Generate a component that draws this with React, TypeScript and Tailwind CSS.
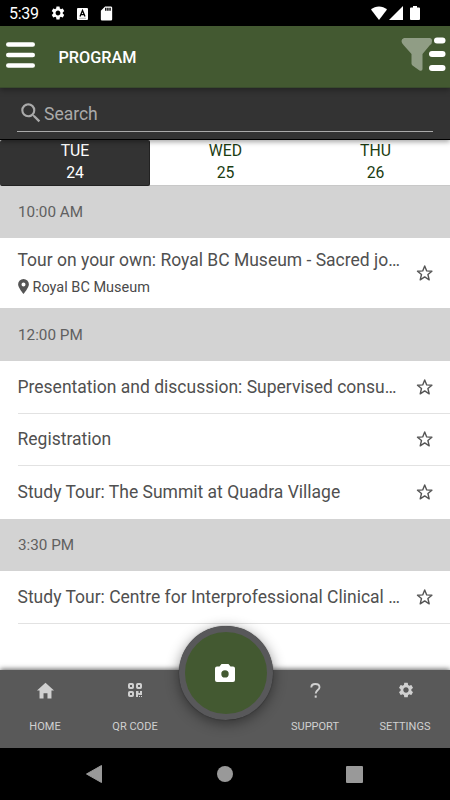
import React from "react";
import { MdSettings, MdSearch, MdSdCard } from "react-icons/md";
import { IoMdHome } from "react-icons/io";

function StatusBar() {
  return (
    <div className="flex h-[26px] shrink-0 items-center bg-black pl-[9px] text-white">
      <span className="w-[41px] pt-[2px] text-[16px] leading-[26px] tracking-[-0.3px]">5:39</span>
      <MdSettings className="size-[16px]" />
      <svg className="ml-[11px] mt-px" width="11" height="12" viewBox="0 0 11 12">
        <rect width="11" height="12" rx="1" fill="#fff" />
        <path d="M3 8.5 5.5 2.5 8 8.5M4 6.7h3" fill="none" stroke="#000" strokeWidth="1.3" />
        <path d="M2 10.3h7" stroke="#888" strokeWidth=".6" />
      </svg>
      <MdSdCard className="ml-[10px] size-[17px]" />
      <svg className="ml-auto mt-[-1px]" width="16" height="14" viewBox="0 0 16 14">
        <path d="M8 14 0 3.6C4.5-.7 11.5-.7 16 3.6Z" fill="#fff" />
      </svg>
      <svg className="ml-[2px]" width="14" height="14" viewBox="0 0 14 14">
        <path d="M14 0v14H0Z" fill="#fff" />
      </svg>
      <svg className="ml-[7px] mr-[30px]" width="10" height="14" viewBox="0 0 10 14">
        <path d="M3 0h4v1.5h2q1 0 1 1V13q0 1-1 1H1q-1 0-1-1V2.500q0-1 1-1h2Z" fill="#fff" />
      </svg>
    </div>
  );
}

function Header() {
  return (
    <header className="relative z-10 flex h-[62px] shrink-0 items-center border-b border-[#394b2d] bg-[#435931] pl-[6px] pr-[4px] shadow-[0_2px_6px_rgba(0,0,0,0.35)]">
      <svg className="mb-[3px]" width="29" height="26" viewBox="0 0 29 26">
        <g fill="#fff">
          <rect y=".2" width="29" height="4.600" rx="2.300" />
          <rect y="10.700" width="29" height="4.600" rx="2.300" />
          <rect y="21.200" width="29" height="4.600" rx="2.300" />
        </g>
      </svg>
      <h1 className="ml-[23.500px] pt-[3px] text-[16.25px] font-medium text-white">PROGRAM</h1>
      <svg className="ml-auto mb-[5px]" width="45" height="36" viewBox="0 0 45 36">
        <path
          d="M3 2h25.500q2.500 0 2.500 3t-2 4L21.500 18v15q0 2.500-3 1.500l-7-5q-1-1-1-2V18L2.500 9Q.5 7 .5 5t2.500-3Z"
          fill="#909d85"
        />
        <g fill="#fff">
          <rect x="33" y="1.500" width="11.500" height="6" rx="3" />
          <rect x="28" y="15" width="16.500" height="6" rx="3" />
          <rect x="28" y="29" width="16.500" height="6" rx="3" />
        </g>
      </svg>
    </header>
  );
}

function Search() {
  return (
    <div className="relative z-[5] h-[52px] shrink-0 border-b border-black bg-[#333] px-[17px] pt-[7px] shadow-[0_2px_5px_rgba(0,0,0,0.35)]">
      <div className="flex h-[36.500px] items-center border-b border-[#aaa] pt-px text-[#aaa]">
        <MdSearch className="ml-px size-[26px]" />
        <span className="pt-px text-[17.5px]">Search</span>
      </div>
    </div>
  );
}

const days = [
  { day: "TUE", date: "24", active: true },
  { day: "WED", date: "25", active: false },
  { day: "THU", date: "26", active: false },
];

function Days() {
  return (
    <div className="grid h-[46px] shrink-0 grid-cols-3 bg-white text-center text-[15.75px] leading-[22px]">
      {days.map((d) => (
        <div
          key={d.day}
          className={
            d.active
              ? "rounded-[2px] border-r border-b border-[#222] bg-[#333] pl-px text-white"
              : "border-b border-[#c8c8c8] pl-px text-[#1b3c12]"
          }
        >
          <div>{d.day}</div>
          <div>{d.date}</div>
        </div>
      ))}
    </div>
  );
}

function Group({ time, className }: { time: string; className: string }) {
  return (
    <div
      className={`flex shrink-0 items-center bg-[#d3d3d3] pl-[18px] text-[15.25px] leading-[22px] text-[#606060] ${className}`}
    >
      {time}
    </div>
  );
}

function Star() {
  return (
    <svg className="size-[18px] shrink-0" viewBox="0 0 18 18">
      <path
        d="M8.700 1.900 10.700 6.900 15.900 7.200 11.900 10.500 13.200 15.800 8.700 12.900 4.200 15.800 5.500 10.500 1.500 7.200 6.700 6.900Z"
        fill="none"
        stroke="#555"
        strokeWidth="1.400"
        strokeLinejoin="round"
      />
    </svg>
  );
}

function Pin() {
  return (
    <svg className="mb-[2px] mr-[4px]" width="11" height="15" viewBox="0 0 11 15">
      <path
        d="M5.500 0A5.400 5.400 0 0 1 10.900 5.300C10.900 8.800 5.500 15 5.500 15S.1 8.800.1 5.300A5.400 5.400 0 0 1 5.500 0Zm0 3.500a2 2 0 1 0 0 4 2 2 0 0 0 0-4Z"
        fill="#555"
      />
    </svg>
  );
}

function Row({ title, place, line = false }: { title: string; place?: string; line?: boolean }) {
  return (
    <div className={`flex shrink-0 pl-[17.5px] ${place ? "h-[70px]" : "h-[52.5px]"}`}>
      <div className={`flex flex-1 items-center ${line ? "border-b border-[#e2e2e2]" : ""}`}>
        <div className="w-[398px] whitespace-nowrap">
          <div className="text-[17.5px] leading-[24px] text-[#505050]">{title}</div>
          {place && (
            <div className="mt-[4px] flex items-center text-[14.5px] leading-[22px] text-[#4a4a4a]">
              <Pin />
              <span className="pt-px">{place}</span>
            </div>
          )}
        </div>
        <Star />
      </div>
    </div>
  );
}

function QrIcon() {
  return (
    <svg width="14" height="14" viewBox="0 0 14 14">
      <g fill="none" stroke="#d0d0d0" strokeWidth="2">
        <rect x="1" y="1" width="4" height="4" rx=".8" />
        <rect x="9" y="1" width="4" height="4" rx=".8" />
        <rect x="1" y="9" width="4" height="4" rx=".8" />
      </g>
      <path
        d="M8 8h2.500v2H12V8h2v4h-3.500v-.5H10V14H8ZM11 13h1v1h-1ZM13 13h1v1h-1Z"
        fill="#d0d0d0"
      />
    </svg>
  );
}

function HelpIcon() {
  return (
    <svg width="11" height="15" viewBox="0 0 11 15">
      <path
        d="M1.300 4.500C1.300 2.300 3 1 5.300 1s4.200 1.300 4.200 3.300C9.500 7 5.700 7 5.700 10.500"
        fill="none"
        stroke="#d0d0d0"
        strokeWidth="1.900"
      />
      <rect x="4.700" y="12.500" width="2" height="2.200" fill="#d0d0d0" />
    </svg>
  );
}

function CameraIcon() {
  return (
    <svg className="mr-px mb-px" width="20" height="18" viewBox="0 0 20 18">
      <path
        fillRule="evenodd"
        d="M6.500 0h7l2 2.500H18q2 0 2 2V16q0 2-2 2H2q-2 0-2-2V4.500q0-2 2-2h2.500ZM10 6.200a3.700 3.700 0 1 0 0 7.400A3.700 3.700 0 0 0 10 6.200Z"
        fill="#fff"
      />
    </svg>
  );
}

function Tab({ icon, label }: { icon: React.ReactNode; label: string }) {
  return (
    <div className="flex w-[90px] flex-col items-center pt-[10px]">
      <div className="flex h-[20px] items-center">{icon}</div>
      <span className="mt-[19px] text-[11px] leading-[16px]">{label}</span>
    </div>
  );
}

function BottomBar() {
  return (
    <nav className="relative flex h-[78px] shrink-0 bg-[#595959] text-[#d0d0d0] shadow-[0_-1px_5px_rgba(0,0,0,0.6)]">
      <Tab icon={<IoMdHome className="size-[21px]" />} label="HOME" />
      <Tab icon={<QrIcon />} label="QR CODE" />
      <div className="w-[90px]">
        <div className="absolute left-[178.500px] top-[-44px] flex size-[94px] items-center justify-center rounded-full border-[6px] border-[#58585a] bg-[#435931] shadow-[0_3px_14px_rgba(0,0,0,0.45),0_0_1px_#222]">
          <CameraIcon />
        </div>
      </div>
      <Tab icon={<HelpIcon />} label="SUPPORT" />
      <Tab icon={<MdSettings className="ml-px size-[18px]" />} label="SETTINGS" />
    </nav>
  );
}

function SystemNav() {
  return (
    <div className="relative flex h-[52px] shrink-0 items-center bg-black pl-[86px]">
      <svg width="16" height="18" viewBox="0 0 16 18">
        <path d="M15.500.5v17L.5 9Z" fill="#999" stroke="#999" strokeLinejoin="round" />
      </svg>
      <div className="ml-[115px] size-[16px] rounded-full bg-[#999]" />
      <div className="ml-[113px] size-[17px] rounded-[1px] bg-[#999]" />
    </div>
  );
}

export default function App() {
  return (
    <div className="flex h-[800px] w-[450px] flex-col overflow-hidden bg-white font-[Roboto,sans-serif]">
      <StatusBar />
      <Header />
      <Search />
      <Days />
      <main className="flex flex-1 flex-col">
        <Group time="10:00 AM" className="h-[52px]" />
        <Row title="Tour on your own: Royal BC Museum - Sacred jo…" place="Royal BC Museum" />
        <Group time="12:00 PM" className="h-[53px]" />
        <Row title="Presentation and discussion: Supervised consu…" line />
        <Row title="Registration" line />
        <Row title="Study Tour: The Summit at Quadra Village" />
        <Group time="3:30 PM" className="h-[52.5px]" />
        <Row title="Study Tour: Centre for Interprofessional Clinical …" line />
      </main>
      <BottomBar />
      <SystemNav />
    </div>
  );
}
